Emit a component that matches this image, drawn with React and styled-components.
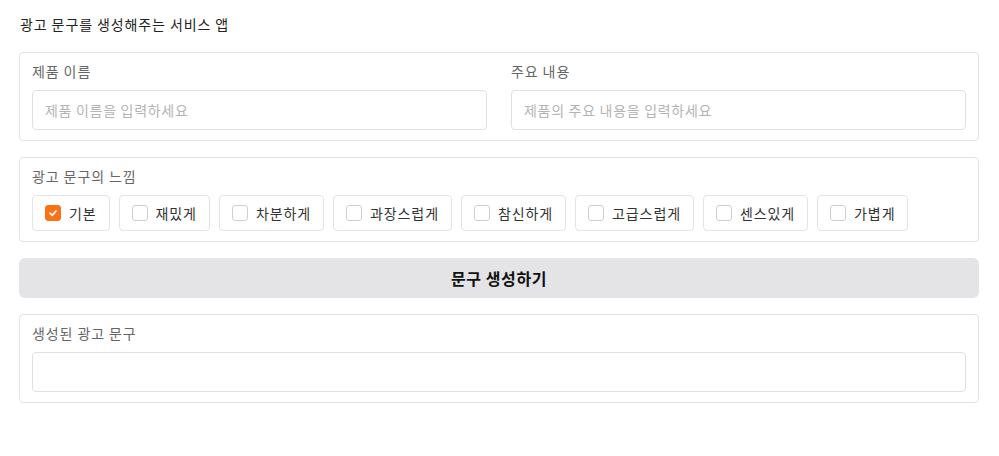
import React, { useState } from 'react';
import styled, { createGlobalStyle } from 'styled-components';

const GlobalStyle = createGlobalStyle`
  body {
    margin: 0;
    background: #ffffff;
    font-family: "Noto Sans CJK KR", "Noto Sans", sans-serif;
    color: #333333;
  }
`;

const TONES = ['기본', '재밌게', '차분하게', '과장스럽게', '참신하게', '고급스럽게', '센스있게', '가볍게'];

export default function App() {
  const [tone, setTone] = useState('기본');

  return (
    <Page>
      <GlobalStyle />
      <Title>광고 문구를 생성해주는 서비스 앱</Title>
      <Stack>
        <Card>
          <Columns>
            <Field>
              <Label>제품 이름</Label>
              <Input placeholder="제품 이름을 입력하세요" />
            </Field>
            <Field>
              <Label>주요 내용</Label>
              <Input placeholder="제품의 주요 내용을 입력하세요" />
            </Field>
          </Columns>
        </Card>

        <Card>
          <Label>광고 문구의 느낌</Label>
          <ToneRow>
            {TONES.map((t) => (
              <ToneItem key={t} onClick={() => setTone(t)}>
                <Box $checked={tone === t}>
                  {tone === t && (
                    <svg width="10" height="10" viewBox="0 0 10 10">
                      <path d="M2 5.2 L4.2 7.3 L8 3" fill="none" stroke="#fff" strokeWidth="1.8" strokeLinecap="round" strokeLinejoin="round" />
                    </svg>
                  )}
                </Box>
                {t}
              </ToneItem>
            ))}
          </ToneRow>
        </Card>

        <GenerateButton>문구 생성하기</GenerateButton>

        <Card>
          <Label>생성된 광고 문구</Label>
          <Output />
        </Card>
      </Stack>
    </Page>
  );
}

const Page = styled.div`
  padding: 12px 20px 20px 19px;
`;

const Title = styled.h1`
  margin: 0 0 16px 1px;
  font-size: 14px;
  font-weight: 400;
  line-height: 24px;
  letter-spacing: 0.9px;
  color: #222;
`;

const Stack = styled.div`
  display: flex;
  flex-direction: column;
  gap: 16px;
`;

const Card = styled.section`
  box-sizing: border-box;
  border: 1px solid #e3e3e3;
  border-radius: 4px;
  padding: 10px 12px;
`;

const Columns = styled.div`
  display: grid;
  grid-template-columns: 1fr 1fr;
  gap: 24px;
`;

const Field = styled.div`
  display: flex;
  flex-direction: column;
`;

const Label = styled.div`
  font-size: 14px;
  line-height: 17px;
  letter-spacing: 0.9px;
  color: #666;
  margin-bottom: 10px;
`;

const Input = styled.input`
  box-sizing: border-box;
  height: 40px;
  border: 1px solid #e0e0e0;
  border-radius: 4px;
  padding: 0 12px;
  font-family: inherit;
  font-size: 14px;
  letter-spacing: 0.7px;
  color: #333;
  outline: none;
  &::placeholder {
    color: #b4b4b4;
  }
`;

const ToneRow = styled.div`
  display: flex;
  gap: 9px;
`;

const ToneItem = styled.label`
  box-sizing: border-box;
  height: 36px;
  display: flex;
  align-items: center;
  gap: 8px;
  padding: 0 12px;
  border: 1px solid #e3e3e3;
  border-radius: 4px;
  font-size: 14px;
  letter-spacing: 0.9px;
  color: #333;
  cursor: pointer;
`;

const Box = styled.span`
  box-sizing: border-box;
  width: 16px;
  height: 16px;
  border-radius: 3px;
  display: flex;
  align-items: center;
  justify-content: center;
  background: ${(p) => (p.$checked ? '#f97316' : '#fff')};
  border: 1px solid ${(p) => (p.$checked ? '#f97316' : '#cfcfcf')};
`;

const GenerateButton = styled.button`
  height: 40px;
  border: none;
  border-radius: 6px;
  background: #e4e4e7;
  font-family: inherit;
  font-size: 16px;
  font-weight: 700;
  letter-spacing: 0.6px;
  color: #111;
  cursor: pointer;
`;

const Output = styled.div`
  box-sizing: border-box;
  height: 40px;
  border: 1px solid #e0e0e0;
  border-radius: 4px;
`;
